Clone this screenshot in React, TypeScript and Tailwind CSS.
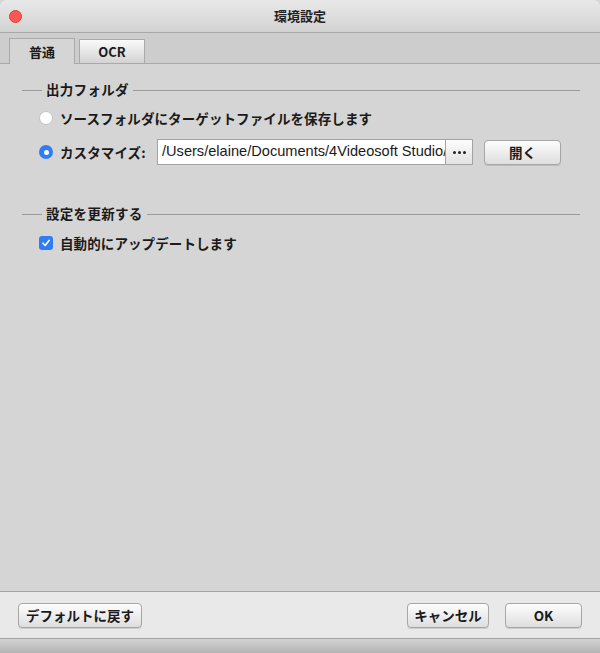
import React from "react"

const jp = "font-['Noto_Sans_CJK_JP','Liberation_Sans',sans-serif]"

function GroupTitle({ label }: { label: string }) {
  return (
    <div className="flex items-center h-5">
      <div className="w-[20px] h-px bg-[#9a9a9a] ml-[22px]" />
      <span className="px-[4px] text-[13.5px] font-bold text-[#1a1a1a] leading-none tracking-[0.3px]">{label}</span>
      <div className="flex-1 h-px bg-[#9a9a9a] mr-[20px]" />
    </div>
  )
}

function Btn({ label, className }: { label: string; className?: string }) {
  return (
    <button
      className={
        "h-[25px] rounded-[4px] border border-[#a6a6a6] bg-gradient-to-b from-[#fdfdfd] to-[#dedede] text-[13.5px] font-bold text-[#1a1a1a] shadow-[0_1px_0_rgba(0,0,0,0.12)] flex items-center justify-center " +
        (className ?? "")
      }
    >
      {label}
    </button>
  )
}

export default function App() {
  return (
    <div className={`w-[600px] h-[653px] flex flex-col bg-[#d5d5d5] overflow-hidden ${jp}`}>
      {/* title bar */}
      <div className="h-[33px] shrink-0 relative flex items-center justify-center rounded-t-[6px] bg-gradient-to-b from-[#e9e9e9] to-[#d2d2d2] border-b border-[#a8a8a8]">
        <div className="absolute left-[9px] top-[10px] w-[13px] h-[13px] rounded-full bg-[#fc5753] border border-[#df3d39]" />
        <span className="text-[13px] font-bold text-[#222]">環境設定</span>
      </div>

      {/* tab strip */}
      <div className="h-[31px] shrink-0 flex items-end gap-[4px] pl-[9px] bg-[#cdcdcd] border-b border-[#a9a9a9]">
        <div className="w-[66px] h-[26px] -mb-px flex items-center justify-center bg-[#d5d5d5] border border-b-0 border-[#a9a9a9] text-[13px] font-bold text-[#1a1a1a]">
          普通
        </div>
        <div className="w-[66px] h-[24px] flex items-center justify-center bg-gradient-to-b from-[#fafafa] to-[#d3d3d3] border border-b-0 border-[#a9a9a9] text-[13px] font-bold text-[#1a1a1a]">
          OCR
        </div>
      </div>

      {/* content */}
      <div className="flex-1 flex flex-col pt-[16px] text-[#1a1a1a]">
        <GroupTitle label="出力フォルダ" />

        <div className="flex items-center h-[20px] mt-[8px] pl-[39px]">
          <div className="w-[14px] h-[14px] rounded-full bg-white border border-[#c4c4c4]" />
          <span className="ml-[7px] text-[13.5px] font-bold tracking-[0.1px]">ソースフォルダにターゲットファイルを保存します</span>
        </div>

        <div className="flex items-center h-[26px] mt-[11px] pl-[39px]">
          <div className="w-[14px] h-[14px] rounded-full bg-[#2f7df6] flex items-center justify-center">
            <div className="w-[5px] h-[5px] rounded-full bg-white" />
          </div>
          <span className="ml-[7px] w-[97px] text-[13.5px] font-bold tracking-[0.1px]">カスタマイズ:</span>
          <div className="w-[289px] h-[26px] bg-white border border-[#a3a3a3] flex items-center pl-[4px] overflow-hidden whitespace-nowrap font-['Liberation_Sans',sans-serif] text-[14.6px] text-[#1a1a1a]">
            /Users/elaine/Documents/4Videosoft Studio/
          </div>
          <button className="w-[27px] h-[26px] border border-l-0 border-[#a3a3a3] bg-gradient-to-b from-[#fdfdfd] to-[#e2e2e2] flex items-center justify-center gap-[2px]">
            <span className="w-[3px] h-[3px] rounded-full bg-[#222]" />
            <span className="w-[3px] h-[3px] rounded-full bg-[#222]" />
            <span className="w-[3px] h-[3px] rounded-full bg-[#222]" />
          </button>
          <Btn label="開く" className="ml-[11px] w-[77px]" />
        </div>

        <div className="mt-[39px]">
          <GroupTitle label="設定を更新する" />
        </div>

        <div className="flex items-center h-[20px] mt-[9px] pl-[39px]">
          <div className="w-[14px] h-[14px] rounded-[3px] bg-[#2f7df6] flex items-center justify-center">
            <svg width="10" height="10" viewBox="0 0 10 10">
              <path d="M2 5.2 L4.2 7.5 L8.2 2.3" stroke="white" strokeWidth="1.6" fill="none" strokeLinecap="round" strokeLinejoin="round" />
            </svg>
          </div>
          <span className="ml-[7px] text-[13.5px] font-bold tracking-[0.1px]">自動的にアップデートします</span>
        </div>
      </div>

      {/* footer */}
      <div className="h-[47px] shrink-0 flex items-center px-[18px] bg-[#e9e9e9] border-t border-[#a3a3a3]">
        <Btn label="デフォルトに戻す" className="w-[124px]" />
        <div className="flex-1" />
        <Btn label="キャンセル" className="w-[82px]" />
        <Btn label="OK" className="w-[77px] ml-[16px]" />
      </div>
      <div className="h-[15px] shrink-0 bg-gradient-to-b from-[#d2d2d2] to-[#b4b4b4] border-t border-[#a3a3a3]" />
    </div>
  )
}
